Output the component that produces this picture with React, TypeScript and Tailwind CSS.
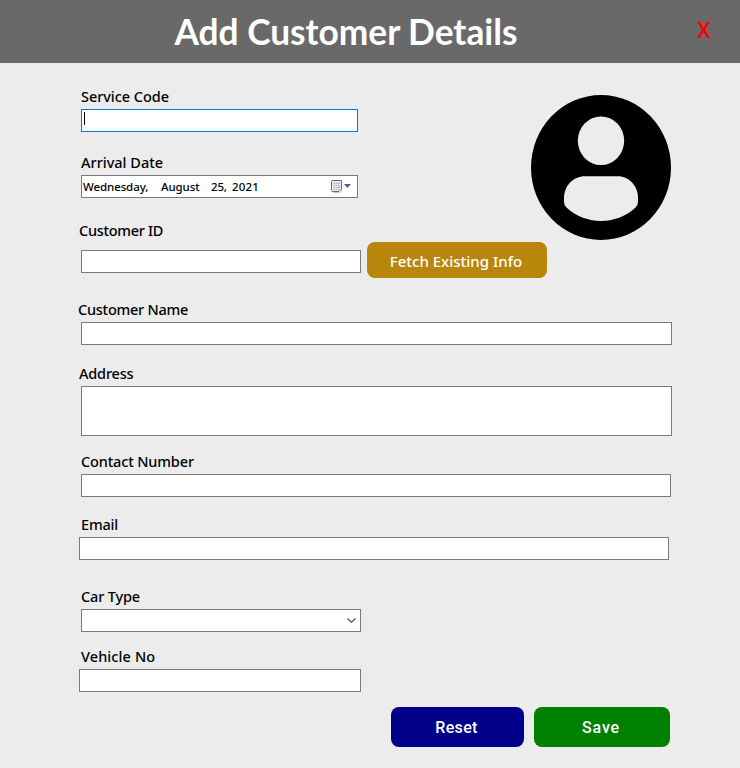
import type { ReactNode } from 'react';

const ui = "font-['Noto_Sans','Open_Sans',sans-serif]";

function Label({ children, className }: { children: ReactNode; className: string }) {
  return (
    <label className={`block h-5 w-fit whitespace-nowrap text-[14.5px] leading-[18px] font-medium text-black ${className}`}>
      {children}
    </label>
  );
}

function Box({ children, className }: { children?: ReactNode; className: string }) {
  return <div className={`flex items-center border bg-white ${className}`}>{children}</div>;
}

function Avatar() {
  return (
    <svg className="mt-2 h-[145px] w-[140px]" viewBox="0 0 140 145">
      <ellipse cx="70" cy="72.5" rx="70" ry="72.5" fill="#000" />
      <ellipse cx="70" cy="45.700" rx="23.2" ry="24.3" fill="#ececec" />
      <path
        d="M54 81.300H87C98 81.300 107 91 107 103V107Q107 110 104.500 112.500C95 121.500 82 126 70 126S45 121.500 35.500 112.500Q33 110 33 107V103C33 91 42 81.300 54 81.300Z"
        fill="#ececec"
      />
    </svg>
  );
}

function CalendarIcon() {
  return (
    <svg className="h-[14px] w-[22px]" viewBox="0 0 22 14">
      <path d="M1.500 .5H10.500V9L8 11.500H1.500Q.5 11.500 .5 10.500V1.500Q.5 .5 1.500 .5Z" fill="#eef1f5" stroke="#70625f" />
      <path d="M2 12.500H9L11.500 10" fill="none" stroke="#c9c9c9" />
      <path d="M2.500 2.500H9V8.500L7.500 10H2.500Z" fill="#aeb9c9" />
      <path d="M4.500 2.500V10M6.500 2.500V10M2.500 4.500H9M2.500 6.500H9M2.500 8.500H9" stroke="#e9edf3" strokeWidth=".7" />
      <path d="M13 4H20L16.500 8Z" fill="#44608c" />
    </svg>
  );
}

export default function App() {
  return (
    <div className={`h-[768px] w-[740px] bg-[#ececec] ${ui}`}>
      <header className="flex h-[63px] items-center bg-[#696969]">
        <h1 className="ml-[174.5px] w-[521.5px] whitespace-nowrap font-['Lato',sans-serif] text-[35.3px] leading-[63px] font-bold tracking-[-0.03px] text-white">
          Add Customer Details
        </h1>
        <button className="h-10 w-[16px] pb-1 text-center text-[21px] leading-[34px] font-semibold text-[#ff0000]">X</button>
      </header>
      <main className="pt-6">
        <div className="flex h-[154px]">
          <section className="w-[531px]">
            <Label className="ml-[81px] tracking-[-0.05px]">Service Code</Label>
            <Box className="mt-0.5 ml-[81px] h-[23px] w-[277px] border-[#0078d7]">
              <span className="ml-0.5 h-[13px] w-px -translate-y-[2px] bg-black" />
            </Box>
            <Label className="mt-[21px] ml-[81px]">Arrival Date</Label>
            <Box className="mt-0.5 ml-[81px] h-[23px] w-[277px] border-[#7a7a7a] pl-px text-[11.5px] font-medium">
              <span className="w-[78px] tracking-[-0.1px]">Wednesday,</span>
              <span className="w-[50px] tracking-[-0.1px]">August</span>
              <span className="w-[21px] tracking-[-0.2px]">25,</span>
              <span className="w-[99px] tracking-[0.2px]">2021</span>
              <CalendarIcon />
            </Box>
            <Label className="mt-[23px] ml-[79px] tracking-[-0.3px]">Customer ID</Label>
          </section>
          <Avatar />
        </div>
        <div className="mt-px ml-[81px] flex h-9 items-center">
          <Box className="mt-[3px] h-[23px] w-[280px] border-[#7a7a7a]" />
          <button className="ml-1.5 h-9 w-[180px] rounded-lg bg-[#b8860b] pt-0.5 pr-[2px] text-[15px] font-medium text-white">
            Fetch Existing Info
          </button>
        </div>
        <Label className="mt-[22px] ml-[78px] tracking-[-0.25px]">Customer Name</Label>
        <Box className="mt-0.5 ml-[81px] h-[23px] w-[591px] border-[#7a7a7a]" />
        <Label className="mt-[19px] ml-[79px] tracking-[-0.2px]">Address</Label>
        <Box className="mt-0.5 ml-[81px] h-[50px] w-[591px] border-[#7a7a7a]" />
        <Label className="mt-4 ml-[81px] tracking-[-0.15px]">Contact Number</Label>
        <Box className="mt-0.5 ml-[81px] h-[23px] w-[590px] border-[#7a7a7a]" />
        <Label className="mt-[18px] ml-[81px] tracking-[-0.2px]">Email</Label>
        <Box className="mt-0.5 ml-[79px] h-[23px] w-[590px] border-[#7a7a7a]" />
        <Label className="mt-[27px] ml-[81px] tracking-[-0.15px]">Car Type</Label>
        <Box className="mt-0.5 ml-[81px] h-[23px] w-[280px] justify-end border-[#7a7a7a] pr-1">
          <svg className="h-[5px] w-[9px]" viewBox="0 0 9 5">
            <path d="M.5 .5L4.500 4.300L8.500 .5" fill="none" stroke="#555" strokeWidth="1.200" />
          </svg>
        </Box>
        <Label className="mt-[15px] ml-[81px] tracking-[0.1px]">Vehicle No</Label>
        <Box className="mt-0.5 ml-[79px] h-[23px] w-[282px] border-[#7a7a7a]" />
        <footer className="mt-[15px] ml-[391px] flex gap-2.5 font-['Roboto',sans-serif] text-[16px] font-medium tracking-[0.3px] text-white">
          <button className="h-10 w-[133px] rounded-lg bg-[#00008b] pt-0.5 pr-[2px]">Reset</button>
          <button className="h-10 w-[136px] rounded-lg bg-[#008000] pt-0.5 pr-[2px] tracking-[0.8px]">Save</button>
        </footer>
      </main>
    </div>
  );
}
